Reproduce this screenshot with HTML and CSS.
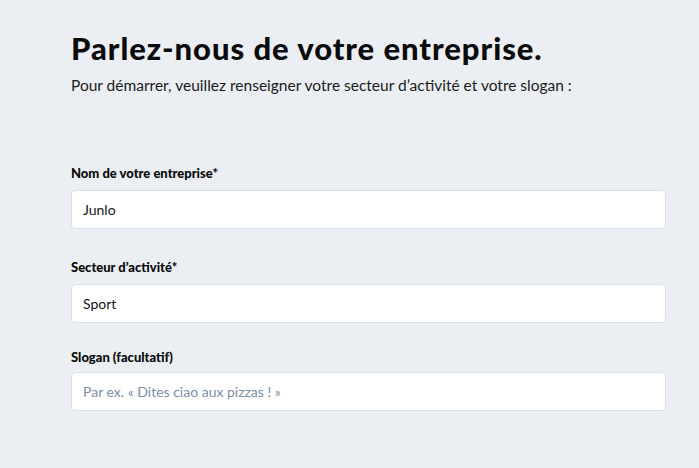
FILE: index.html
```html
<!DOCTYPE html>
<html lang="fr">
<head>
<meta charset="utf-8">
<link rel="stylesheet" href="styles.css">
</head>
<body>
<main class="page">
  <h1 class="title">Parlez-nous de votre entreprise.</h1>
  <p class="lead">Pour démarrer, veuillez renseigner votre secteur d’activité et votre slogan :</p>
  <form class="form">
    <div class="field">
      <label class="label">Nom de votre entreprise*</label>
      <div class="input">Junlo</div>
    </div>
    <div class="field">
      <label class="label">Secteur d’activité*</label>
      <div class="input">Sport</div>
    </div>
    <div class="field field-tight">
      <label class="label">Slogan (facultatif)</label>
      <div class="input placeholder">Par ex. « Dites ciao aux pizzas ! »</div>
    </div>
  </form>
</main>
</body>
</html>
```

FILE: styles.css
```css
html, body {
  margin: 0;
  padding: 0;
  background: #ebeff4;
}
body {
  font-family: "Lato", "Noto Sans", sans-serif;
  color: #111;
}
.page {
  padding: 30px 33px 0 71px;
}
.title {
  margin: 0;
  font-size: 31px;
  font-weight: 900;
  line-height: 36px;
  letter-spacing: 0.95px;
  color: #0a0a0a;
}
.lead {
  margin: 8px 0 0;
  font-size: 15.5px;
  line-height: 22px;
  color: #1a1a1a;
}
.form {
  display: flex;
  flex-direction: column;
  gap: 30px;
  margin-top: 69px;
}
.field {
  display: flex;
  flex-direction: column;
  gap: 9px;
}
.field-tight {
  margin-top: -4px;
  gap: 7px;
}
.label {
  font-size: 13px;
  font-weight: 900;
  line-height: 16px;
  color: #0a0a0a;
}
.input {
  box-sizing: border-box;
  height: 39px;
  background: #fff;
  border: 1px solid #d9e0e8;
  border-radius: 4px;
  padding: 0 11px;
  display: flex;
  align-items: center;
  font-size: 14px;
  color: #151515;
}
.placeholder {
  color: #7a8ea8;
}
```
